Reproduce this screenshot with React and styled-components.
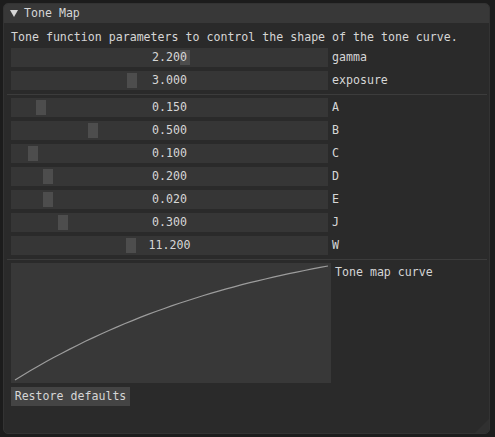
import React from "react";
import styled, { createGlobalStyle } from "styled-components";

const GlobalStyle = createGlobalStyle`
  html, body {
    margin: 0;
    padding: 0;
    background: #1c1c1c;
  }
  body {
    font-family: "DejaVu Sans Mono", "Liberation Mono", monospace;
    font-size: 11.6px;
    color: #d6d6d6;
  }
`;

const params = [
  { name: "A", value: "0.150", grab: 25 },
  { name: "B", value: "0.500", grab: 77 },
  { name: "C", value: "0.100", grab: 17 },
  { name: "D", value: "0.200", grab: 32 },
  { name: "E", value: "0.020", grab: 32 },
  { name: "J", value: "0.300", grab: 47 },
  { name: "W", value: "11.200", grab: 115 },
];

const curvePoints = () => {
  const pts = [];
  const n = 40;
  for (let i = 0; i <= n; i++) {
    const u = i / n;
    const v = 1.7 * u - 0.9 * u * u + 0.2 * u * u * u;
    const x = 4 + u * 313;
    const y = 117 - Math.min(v, 1) * 114;
    pts.push(`${x.toFixed(1)},${y.toFixed(1)}`);
  }
  return pts.join(" ");
};

const App = () => {
  return (
    <>
      <GlobalStyle />
      <Window>
        <TitleBar>
          <Arrow />
          <span>Tone Map</span>
        </TitleBar>
        <Body>
          <TextLine>Tone function parameters to control the shape of the tone curve.</TextLine>
          <Row>
            <Slider>
              <Grab style={{ left: 169 }} />
              <Value>2.200</Value>
            </Slider>
            <Label>gamma</Label>
          </Row>
          <Row>
            <Slider>
              <Grab style={{ left: 116 }} />
              <Value>3.000</Value>
            </Slider>
            <Label>exposure</Label>
          </Row>
          <Separator />
          {params.map((p) => (
            <Row key={p.name}>
              <Slider>
                <Grab style={{ left: p.grab }} />
                <Value>{p.value}</Value>
              </Slider>
              <Label>{p.name}</Label>
            </Row>
          ))}
          <Separator />
          <PlotRow>
            <Plot>
              <svg width="320" height="120" viewBox="0 0 320 120">
                <polyline points={curvePoints()} fill="none" stroke="#9c9c9c" strokeWidth="1.2" />
              </svg>
            </Plot>
            <PlotLabel>Tone map curve</PlotLabel>
          </PlotRow>
          <Button>Restore defaults</Button>
        </Body>
        <Grip />
      </Window>
    </>
  );
};

const Window = styled.div`
  position: relative;
  margin: 3px 0 0 3px;
  width: 487px;
  height: 431px;
  background: #2a2a2a;
  border: 1px solid #333333;
  border-radius: 5px;
  box-sizing: border-box;
  overflow: hidden;
`;
const TitleBar = styled.div`
  height: 19px;
  background: #383838;
  display: flex;
  flex-direction: row;
  align-items: center;
  padding-left: 6px;
  gap: 6px;
  line-height: 19px;
`;
const Arrow = styled.div`
  width: 0;
  height: 0;
  border-left: 4px solid transparent;
  border-right: 4px solid transparent;
  border-top: 7px solid #d6d6d6;
`;
const Body = styled.div`
  display: flex;
  flex-direction: column;
  gap: 4px;
  padding: 8px 7px 8px 7px;
`;
const TextLine = styled.div`
  height: 13px;
  line-height: 13px;
  white-space: nowrap;
`;
const Row = styled.div`
  display: flex;
  flex-direction: row;
  align-items: center;
  gap: 4px;
  height: 19px;
`;
const Slider = styled.div`
  position: relative;
  width: 317px;
  height: 19px;
  background: #363636;
`;
const Grab = styled.div`
  position: absolute;
  top: 2px;
  width: 10px;
  height: 15px;
  background: #4d4d4d;
`;
const Value = styled.div`
  position: relative;
  text-align: center;
  line-height: 19px;
`;
const Label = styled.div`
  line-height: 19px;
`;
const Separator = styled.div`
  height: 1px;
  background: #3c3c3c;
  margin: 0 -5px -1px -4px;
`;
const PlotRow = styled.div`
  display: flex;
  flex-direction: row;
  align-items: flex-start;
  gap: 4px;
`;
const Plot = styled.div`
  width: 320px;
  height: 120px;
  background: #383838;
  & > svg {
    display: block;
  }
`;
const PlotLabel = styled.div`
  padding-top: 3px;
  line-height: 13px;
`;
const Button = styled.div`
  align-self: flex-start;
  width: 119px;
  height: 19px;
  line-height: 19px;
  background: #444444;
  text-align: center;
  white-space: nowrap;
`;
const Grip = styled.div`
  position: absolute;
  right: 0;
  bottom: 0;
  width: 0;
  height: 0;
  border-left: 14px solid transparent;
  border-bottom: 14px solid #303030;
`;

export default App;
